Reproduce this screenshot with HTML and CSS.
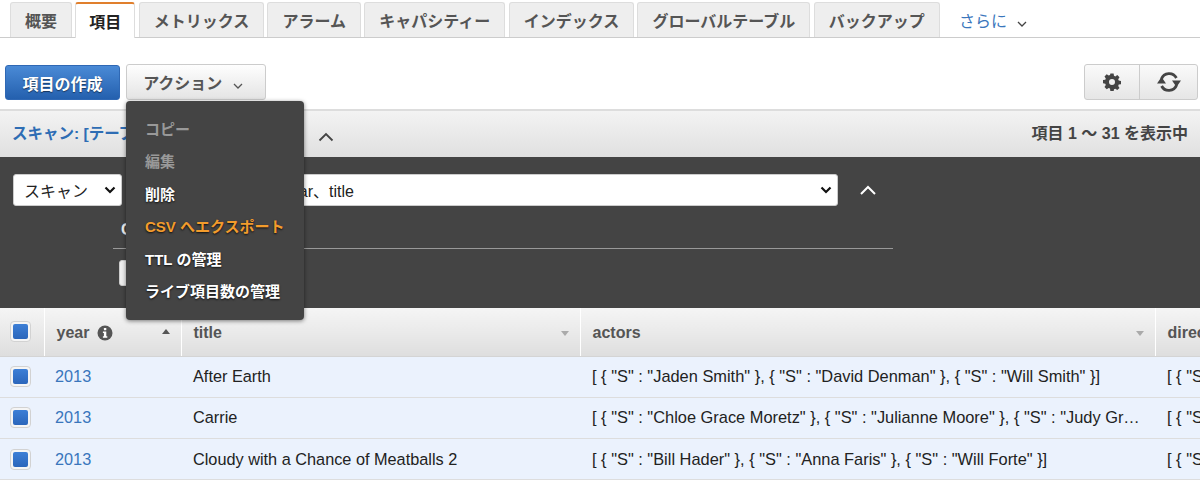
FILE: index.html
```html
<!DOCTYPE html>
<html lang="ja">
<head>
<meta charset="utf-8">
<title>項目</title>
<link rel="stylesheet" href="styles.css">
</head>
<body>
<div class="page">
  <nav class="tabs">
    <a class="tab">概要</a>
    <a class="tab active">項目</a>
    <a class="tab">メトリックス</a>
    <a class="tab">アラーム</a>
    <a class="tab">キャパシティー</a>
    <a class="tab">インデックス</a>
    <a class="tab">グローバルテーブル</a>
    <a class="tab">バックアップ</a>
    <a class="more">さらに
      <svg class="chev" width="10" height="6" viewBox="0 0 10 6"><path d="M1 1l4 4 4-4" fill="none" stroke="#444" stroke-width="1.3"/></svg>
    </a>
  </nav>

  <div class="toolbar">
    <button class="btn primary">項目の作成</button>
    <div class="action-wrap">
      <button class="btn action">アクション
        <svg class="chev" width="10" height="6" viewBox="0 0 10 6"><path d="M1 1l4 4 4-4" fill="none" stroke="#555" stroke-width="1.3"/></svg>
      </button>
      <ul class="menu">
        <li class="off">コピー</li>
        <li class="off">編集</li>
        <li>削除</li>
        <li class="hot">CSV へエクスポート</li>
        <li>TTL の管理</li>
        <li>ライブ項目数の管理</li>
      </ul>
    </div>
    <div class="btn-group">
      <button class="icon-btn gear-btn" aria-label="設定">
        <svg width="18" height="18" viewBox="0 0 18 18"><path fill="#444" fill-rule="evenodd" d="M7.4 0.5h3.2l.4 2.3 1.3.6 2-1.3 2.2 2.2-1.3 2 .5 1.3 2.3.4v3.2l-2.3.4-.5 1.3 1.3 2-2.2 2.2-2-1.3-1.3.5-.4 2.2H7.4L7 15.4l-1.3-.5-2 1.3-2.2-2.2 1.3-2-.5-1.3L0 10.3V7.1l2.3-.4.5-1.3-1.3-2 2.2-2.2 2 1.3 1.3-.6zM9 6a3 3 0 1 0 0 6 3 3 0 0 0 0-6z"/></svg>
      </button>
      <button class="icon-btn" aria-label="更新">
        <svg width="24" height="22" viewBox="0 0 24 22"><g fill="none" stroke="#444" stroke-width="2.8"><path d="M4.4 8A8.2 8.2 0 0 1 19.4 7"/><path d="M19.6 14A8.2 8.2 0 0 1 4.6 15"/></g><path fill="#444" d="M15 9.5h9l-4.5 6.5zM0 12.5h9L4.5 6z"/></svg>
      </button>
    </div>
  </div>

  <section class="scan-bar">
    <div class="scan-title">
      <span class="link">スキャン: [テーブル] Movies: year、title</span>
      <svg class="up" width="16" height="10" viewBox="0 0 16 10"><path d="M1.5 8.5L8 2l6.5 6.5" fill="none" stroke="#444" stroke-width="1.8"/></svg>
    </div>
    <strong class="count">項目 1 〜 31 を表示中</strong>
  </section>

  <section class="panel">
    <div class="panel-row">
      <select class="sel sel-type"><option>スキャン</option></select>
      <select class="sel sel-table"><option>[テーブル] Movies: year、title</option></select>
      <svg class="up panel-up" width="18" height="10" viewBox="0 0 18 10"><path d="M2 9l7-7 7 7" fill="none" stroke="#fff" stroke-width="2"/></svg>
    </div>
    <div class="filter">
      <div class="filter-label">Q</div>
      <button class="start">開始</button>
    </div>
  </section>

  <div class="table-wrap">
    <table class="grid">
      <colgroup>
        <col class="c-check"><col class="c-year"><col class="c-title"><col class="c-actors"><col class="c-dir">
      </colgroup>
      <thead>
        <tr>
          <th class="check"><span class="box"><i></i></span></th>
          <th><span class="th-in">year
            <svg class="info" width="16" height="16" viewBox="0 0 16 16"><circle cx="8" cy="8" r="7.5" fill="#555"/><rect x="6.9" y="3" width="2.4" height="2.3" rx=".5" fill="#fff"/><path fill="#fff" d="M5.9 6.6h3.4v4.7h1v1.4H5.9v-1.4h1V8H5.9z"/></svg>
            <span class="sort up-sort"></span></span></th>
          <th><span class="th-in">title<span class="sort down-sort"></span></span></th>
          <th><span class="th-in">actors<span class="sort down-sort"></span></span></th>
          <th><span class="th-in">directors</span></th>
        </tr>
      </thead>
      <tbody>
        <tr>
          <td class="check"><span class="box"><i></i></span></td>
          <td class="year">2013</td>
          <td class="name">After Earth</td>
          <td class="json">[ { "S" : "Jaden Smith" }, { "S" : "David Denman" }, { "S" : "Will Smith" }]</td>
          <td class="json">[ { "S" : "M. Night Shyamalan" } ]</td>
        </tr>
        <tr>
          <td class="check"><span class="box"><i></i></span></td>
          <td class="year">2013</td>
          <td class="name">Carrie</td>
          <td class="json">[ { "S" : "Chloe Grace Moretz" }, { "S" : "Julianne Moore" }, { "S" : "Judy Greer" }]</td>
          <td class="json">[ { "S" : "Kimberly Peirce" } ]</td>
        </tr>
        <tr>
          <td class="check"><span class="box"><i></i></span></td>
          <td class="year">2013</td>
          <td class="name">Cloudy with a Chance of Meatballs 2</td>
          <td class="json">[ { "S" : "Bill Hader" }, { "S" : "Anna Faris" }, { "S" : "Will Forte" }]</td>
          <td class="json">[ { "S" : "Cody Cameron" } ]</td>
        </tr>
      </tbody>
    </table>
  </div>
</div>
</body>
</html>
```

FILE: styles.css
```css
* { box-sizing: border-box; }
html, body { margin: 0; padding: 0; background: #fff; }
body {
  font-family: "Liberation Sans", "Noto Sans CJK JP", sans-serif;
  font-size: 16px;
  color: #222;
}
.page { width: 1200px; height: 482px; overflow: hidden; position: relative; }

.tabs {
  display: flex;
  align-items: flex-end;
  gap: 3.3px;
  height: 38px;
  padding: 2px 0 0 10px;
  border-bottom: 1px solid #ccc;
}
.tab {
  height: 35px;
  padding: 0 14px;
  line-height: 37px;
  font-weight: 700;
  color: #555;
  background: #eee;
  border: 1px solid #ddd;
  border-bottom: 0;
  border-radius: 3px 3px 0 0;
  white-space: nowrap;
}
.tab.active {
  height: 36px;
  margin-bottom: -1px;
  padding: 0 13px;
  background: #fff;
  color: #222;
  border-top: 2px solid #e07f2d;
  border-color: #e07f2d #ddd #fff;
}
.more { margin-left: 16px; line-height: 40px; height: 35px; color: #3a76bc; white-space: nowrap; }
.chev { margin-left: 6px; vertical-align: 0; }

.toolbar {
  display: flex;
  align-items: center;
  height: 71px;
  padding: 26px 2px 9px 5px;
}
.btn {
  font: inherit;
  font-weight: 700;
  height: 36px;
  border-radius: 3px;
  padding: 0;
}
.primary {
  width: 115px;
  height: 35px;
  margin-top: 1px;
  color: #fff;
  text-shadow: 0 1px 1px rgba(0,0,0,.5);
  background: linear-gradient(#4a8ad6, #2460ae);
  border: 1px solid #2f68b4;
}
.action-wrap { margin-left: 6px; position: relative; }
.action {
  display: block;
  width: 140px;
  padding-right: 6px;
  color: #555;
  background: linear-gradient(#fefefe, #e4e4e4);
  border: 1px solid #ccc;
}
.menu {
  position: absolute;
  z-index: 5;
  left: 0;
  top: 37px;
  width: 178px;
  height: 219px;
  margin: 0;
  padding: 13px 19px;
  list-style: none;
  background: #444;
  border-radius: 4px;
  box-shadow: 0 1px 4px rgba(0,0,0,.5);
  font-weight: 700;
  font-size: 15px;
  color: #fff;
  text-shadow: 0 1px 2px rgba(0,0,0,.8);
}
.menu li { height: 32.4px; line-height: 32px; white-space: nowrap; }
.menu .off { color: #999; text-shadow: none; }
.menu .hot { color: #f39c2c; }

.btn-group {
  margin-left: auto;
  display: flex;
  width: 114px;
  height: 36px;
  border: 1px solid #ccc;
  border-radius: 3px;
  background: linear-gradient(#fafafa, #e6e6e6);
}
.icon-btn {
  flex: 1;
  padding: 0;
  border: 0;
  background: none;
  display: flex;
  align-items: center;
  justify-content: center;
}
.gear-btn { flex: 0 0 54px; }
.icon-btn + .icon-btn { border-left: 1px solid #ccc; }

.scan-bar {
  display: flex;
  justify-content: space-between;
  align-items: center;
  height: 48px;
  padding: 0 12px 4px;
  border-top: 2px solid #ddd;
  background: linear-gradient(#f3f3f3, #e0e0e0);
}
.scan-title { display: flex; align-items: center; width: 322px; white-space: nowrap; position: relative; }
.link { color: #2e6db4; font-weight: 700; font-size: 15.5px; overflow: hidden; flex: 0 0 292px; }
.up { margin-left: 14px; flex: none; }
.scan-title .up { margin-top: 10px; }
.count { color: #444; font-size: 16px; }

.panel { height: 151px; background: #444; padding: 17px 0 0 13px; position: relative; }
.panel-row { display: flex; align-items: center; }
.sel {
  font: inherit;
  height: 32px;
  appearance: none;
  background: #fff url("data:image/svg+xml,%3Csvg xmlns='http://www.w3.org/2000/svg' width='12' height='8' viewBox='0 0 12 8'%3E%3Cpath d='M1.5 1.5L6 6l4.5-4.5' fill='none' stroke='%23111' stroke-width='2.2'/%3E%3C/svg%3E") no-repeat right 5px center;
  border: 1px solid #ccc;
  border-radius: 3px;
  color: #222;
  padding: 3px 0 0 10px;
}
.sel-type { width: 109px; }
.sel-table { width: 708px; margin-left: 8px; padding-left: 15px; }
.panel-up { margin-left: 21px; }
.filter { margin-left: 100px; margin-top: 11px; width: 780px; }
.filter-label {
  height: 32px;
  line-height: 26px;
  color: #eee;
  font-weight: 700;
  padding-left: 8px;
  border-bottom: 1px solid #999;
}
.start {
  display: block;
  margin: 11px 0 0 6px;
  width: 60px;
  height: 26px;
  font: inherit;
  background: #eee;
  border: 1px solid #ccc;
  border-radius: 3px;
}

.table-wrap { overflow: hidden; }
.grid { table-layout: fixed; width: 1400px; border-collapse: collapse; }
.c-check { width: 44px; }
.c-year { width: 137px; }
.c-title { width: 399px; }
.c-actors { width: 575px; }
.c-dir { width: 245px; }
th {
  height: 48px;
  padding: 0;
  text-align: left;
  color: #555;
  font-weight: 700;
  background: linear-gradient(#f5f5f5, #dedede);
  border-bottom: 1px solid #d4d4d4;
  border-left: 1px solid #fff;
}
th:first-child { border-left: 0; }
.th-in { display: flex; align-items: center; gap: 8px; padding: 3px 11px 0 12px; position: relative; height: 47px; }
.info { flex: none; }
.sort {
  margin-left: auto;
  width: 0;
  height: 0;
  border-left: 4px solid transparent;
  border-right: 4px solid transparent;
}
.up-sort { border-bottom: 5px solid #555; margin-top: -3px; }
.down-sort { border-top: 5px solid #aaa; }
td {
  height: 41.3px;
  padding: 0 12px;
  background: #ebf2fd;
  border-bottom: 1px solid #ddd;
  white-space: nowrap;
  overflow: hidden;
  text-overflow: ellipsis;
}
td.year { color: #3a76bc; padding-left: 11px; font-size: 16.3px; }
td.name { font-size: 16.3px; }
td.json { font-size: 16.4px; padding-right: 10px; }
td.check, th.check { padding: 0; text-align: center; }
.box {
  display: inline-flex;
  align-items: center;
  justify-content: center;
  width: 21px;
  height: 21px;
  vertical-align: middle;
  background: #f5f5f5;
  border: 1px solid #d2d2d2;
  border-radius: 4px;
  margin-left: -3px;
}
.box i { width: 15px; height: 15px; border-radius: 2px; background: linear-gradient(#3d7fd6, #2b66bb); }
```
